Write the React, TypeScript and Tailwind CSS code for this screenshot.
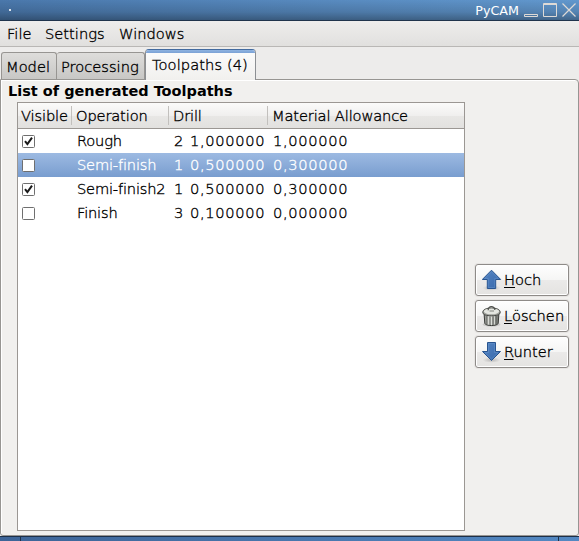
import React from "react";

type Row = { on: boolean; op: string; drill: string; size: string; allowance: string; selected?: boolean };

const rows: Row[] = [
  { on: true, op: "Rough", drill: "2", size: "1,000000", allowance: "1,000000" },
  { on: false, op: "Semi-finish", drill: "1", size: "0,500000", allowance: "0,300000", selected: true },
  { on: true, op: "Semi-finish2", drill: "1", size: "0,500000", allowance: "0,300000" },
  { on: false, op: "Finish", drill: "3", size: "0,100000", allowance: "0,000000" },
];

function Check({ on }: { on: boolean }) {
  return (
    <svg width="13" height="13" viewBox="0 0 13 13" className="block">
      <rect x=".5" y=".5" width="12" height="12" rx="1" fill="#fff" stroke="#6f6f6f" />
      {on && <path d="M3 6.2 5.4 9.2 10 2.7" fill="none" stroke="#1a1a1a" strokeWidth="2" />}
    </svg>
  );
}

function Arrow({ down }: { down?: boolean }) {
  return (
    <svg width="20" height="22" viewBox="0 0 20 22" className="block shrink-0">
      <defs>
        <linearGradient id="arrow" x1="0" y1="0" x2="1" y2="1">
          <stop offset="0" stopColor="#5585c2" />
          <stop offset="1" stopColor="#3768ab" />
        </linearGradient>
        <radialGradient id="shade">
          <stop offset="0" stopColor="#000" stopOpacity=".2" />
          <stop offset="1" stopColor="#000" stopOpacity="0" />
        </radialGradient>
      </defs>
      <ellipse cx="9.5" cy="19" rx="9" ry="2.8" fill="url(#shade)" />
      <path
        d={down ? "M5.5 1.5h8v9h5L9.5 19.5.5 10.5h5z" : "M9.5 1.2 18.7 10.5h-5v9h-8.4v-9h-5z"}
        fill="url(#arrow)"
        stroke="#28548f"
      />
      <path
        d={down ? "M6.5 2.5h6v9h3.7L9.5 18 2.8 11.5h3.7z" : "M9.5 2.8 16.3 9.5h-3.6v9H6.3v-9H2.7z"}
        fill="none"
        stroke="#6d9bd2"
        strokeOpacity=".5"
        strokeWidth=".8"
      />
    </svg>
  );
}

function Trash() {
  return (
    <svg width="20" height="22" viewBox="0 0 20 22" className="block shrink-0">
      <defs>
        <linearGradient id="can">
          <stop offset="0" stopColor="#8a8c87" />
          <stop offset=".4" stopColor="#d3d5cf" />
          <stop offset="1" stopColor="#6b6d69" />
        </linearGradient>
      </defs>
      <ellipse cx="9.5" cy="19.5" rx="9" ry="2" fill="#000" opacity=".12" />
      <path d="M2 7.5 2.8 18.3c.5 3 12.9 3 13.4 0L17 7.5z" fill="url(#can)" stroke="#3a3c38" />
      <path d="M4.9 11v8M8 11.5v8.5M11 11.5v8.5M14.1 11v8" stroke="#5c5e5a" strokeWidth="1" />
      <path d="M6.4 11v8.5M9.5 11.5v8.5M12.5 11v8.5" stroke="#e2e4de" strokeWidth=".8" />
      <path d="M.8 7.2C.8 4.5 4.6 3 9.5 3s8.7 1.5 8.7 4.2-3.8 3.6-8.7 3.6S.8 9.9.8 7.2z" fill="#9c9e98" stroke="#484a46" />
      <ellipse cx="9.5" cy="6.4" rx="7.6" ry="2.9" fill="#e4e6e0" />
      <path d="M6.2 5.2C5.7.6 12.8.4 12.9 5" fill="none" stroke="#4d4f4b" strokeWidth="1.2" />
      <path d="M7.5 6h4.5" stroke="#8b8d88" strokeWidth="1.1" />
    </svg>
  );
}

function ActionButton({ icon, first, rest }: { icon: React.ReactNode; first: string; rest: string }) {
  return (
    <div className="flex h-8 w-[94px] items-center rounded-[3px] border border-[#8e8b88] bg-[linear-gradient(#fefefe_0%,#f5f5f4_50%,#ebeae9_51%,#e4e3e1_100%)] pl-[6px] shadow-[0_0_0_1px_#e7e5e3,inset_0_0_0_1px_#fff]">
      {icon}
      <span className="ml-[2px] whitespace-nowrap leading-5">
        <span className="underline decoration-1 underline-offset-2">{first}</span>
        {rest}
      </span>
    </div>
  );
}

export default function App() {
  return (
    <div className="flex h-[541px] w-[579px] flex-col overflow-hidden bg-[#edeceb] font-['DejaVu_Sans',sans-serif] text-[14.67px] font-extralight leading-5 text-black [-webkit-text-stroke:0.35px]">
      <div className="h-[21px] shrink-0 bg-[linear-gradient(90deg,#4a78ac,#6298ce)]">
        <div className="flex h-full items-start border-b border-[#20344c] bg-[linear-gradient(#0000_0%,#0002_60%,#0005_100%)]">
          <div className="ml-[9px] mt-[9px] size-[2px] bg-[#dce4ec]" />
          <div className="ml-auto mr-[5px] text-[12.7px] font-normal leading-[21px] text-white [-webkit-text-stroke:0]">PyCAM</div>
          <svg width="55" height="20" viewBox="0 0 55 20" fill="none" stroke="#dedad6" className="block">
            <path d="M.5 14.5h13v2H.5z" />
            <path d="M19.5 3.5h13v13h-13zM19 4.5h14" />
            <path d="m38.5 3.5 13 13m0-13-13 13" strokeWidth="1.2" />
          </svg>
        </div>
      </div>
      <div className="flex h-[26px] shrink-0 items-center border-b border-[#b9b7b5] bg-[linear-gradient(#eeedec,#e1e0de)] pl-[7px]">
        <span className="w-[38px]">File</span>
        <span className="w-[74px]">Settings</span>
        <span>Windows</span>
      </div>
      <div className="z-10 flex h-[33px] shrink-0 items-end pl-px">
        <div className="mb-px flex h-[27px] w-[56px] items-center rounded-t-[3px] border border-b-0 border-[#979592] bg-[linear-gradient(#dedddb,#c8c7c5)] pl-1 pt-[2px]">Model</div>
        <div className="mb-px flex h-[27px] w-[88px] items-center rounded-t-[3px] border border-b-0 border-l-0 border-[#979592] bg-[linear-gradient(#dedddb,#c8c7c5)] pl-1 pt-[2px]">Processing</div>
        <div className="flex h-[31px] w-[111px] flex-col overflow-hidden rounded-t-[4px] border border-b-0 border-t-[#436b9f] border-x-[#8c8f93] bg-[linear-gradient(#fcfcfc,#f1f0ee)]">
          <div className="h-[3px] bg-[linear-gradient(#8fb3e0,#7ba2d6)]" />
          <div className="pl-[6px] pt-[2px] tracking-[0.08px]">Toolpaths (4)</div>
        </div>
      </div>
      <div className="-mt-px flex h-[457px] shrink-0 flex-col rounded-tr-[4px] rounded-b-[3px] border border-[#979592] bg-[#f1f0ee] shadow-[inset_1px_1px_0_#fff]">
        <div className="h-[22px] pl-[7px] pt-px text-[14.5px] font-bold text-black [-webkit-text-stroke:0]">List of generated Toolpaths</div>
        <div className="flex">
          <div className="ml-4 h-[429px] w-[448px] border border-[#9b9793] bg-white">
            <div className="grid h-[26px] grid-cols-[54px_97px_99px_1fr] items-center border-b border-[#9b9793] bg-[linear-gradient(#fbfbfa_0%,#f0efee_50%,#e8e7e5_52%,#e2e1df_100%)]">
              {["Visible", "Operation", "Drill", "Material Allowance"].map((t, i) => (
                <div key={t} className={`flex h-[19px] items-center whitespace-nowrap tracking-[-0.15px] ${i === 0 ? "pl-[3px]" : "pl-1"} ${i < 3 ? "border-r border-[#c2c0bd]" : ""}`}>
                  {t}
                </div>
              ))}
            </div>
            {rows.map((r) => (
              <div
                key={r.op}
                className={`grid h-6 grid-cols-[59px_97px_16px_83px_1fr] items-center ${r.selected ? "bg-[linear-gradient(#9dbae2,#799dcf)] text-white" : ""}`}
              >
                <div className="pl-1"><Check on={r.on} /></div>
                <span className="tracking-[-0.2px]">{r.op}</span>
                <span>{r.drill}</span>
                <span className="tracking-[0.68px]">{r.size}</span>
                <span className="tracking-[0.68px]">{r.allowance}</span>
              </div>
            ))}
          </div>
          <div className="ml-[10px] mt-[162px] flex flex-col gap-1">
            <ActionButton icon={<Arrow />} first="H" rest="och" />
            <ActionButton icon={<Trash />} first="L" rest="öschen" />
            <ActionButton icon={<Arrow down />} first="R" rest="unter" />
          </div>
        </div>
      </div>
      <div className="flex h-[5px] shrink-0 justify-between border-t border-[#1d3048] bg-[linear-gradient(90deg,#3d6497,#5388c2)] px-5">
        <div className="w-px bg-[#1d3048]" />
        <div className="w-px bg-[#1d3048]" />
      </div>
    </div>
  );
}
